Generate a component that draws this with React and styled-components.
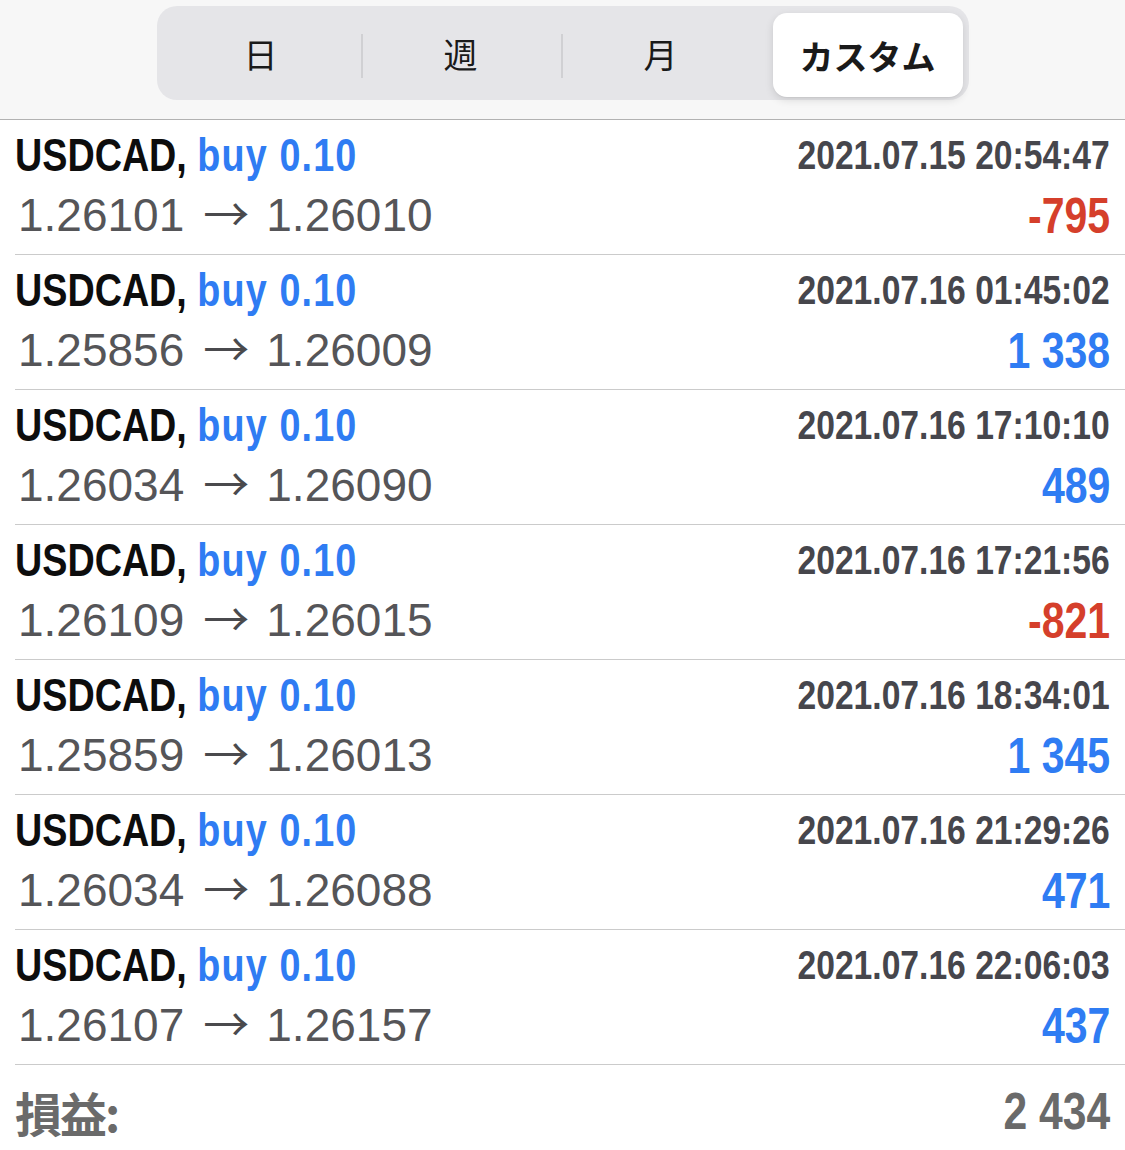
import React from "react";
import styled, { createGlobalStyle } from "styled-components";

const GlobalStyle = createGlobalStyle`
  html, body {
    margin: 0;
    padding: 0;
    background: #ffffff;
  }
  body {
    font-family: "Liberation Sans", Arial, sans-serif;
  }
`;

// no condensed Helvetica here, so bold Liberation Sans is narrowed like Arial Narrow
const Narrow = styled.span`
  display: inline-block;
  font-family: "Liberation Sans", Arial, sans-serif;
  font-weight: 700;
  transform: scaleX(0.82);
  transform-origin: ${(p) => (p.$right ? "right" : "left")} center;
  white-space: nowrap;
`;

const Page = styled.div`
  width: 1125px;
  height: 1150px;
  overflow: hidden;
  background: #fff;
`;

const Header = styled.div`
  height: 120px;
  background: #f7f7f7;
  border-bottom: 1px solid #b2b2b2;
  display: flex;
  justify-content: center;
  padding-top: 6px;
  box-sizing: border-box;
`;

const Segmented = styled.div`
  width: 812px;
  height: 94px;
  background: #e5e5e8;
  border-radius: 20px;
  padding: 6px;
  box-sizing: border-box;
  display: grid;
  grid-template-columns: repeat(4, 1fr);
`;

const Segment = styled.div`
  position: relative;
  display: flex;
  align-items: center;
  justify-content: center;
  font-family: "Noto Sans CJK JP", sans-serif;
  font-size: 34px;
  font-weight: ${(p) => (p.$active ? 600 : 400)};
  color: #1a1a1a;
  border-radius: 14px;
  background: ${(p) => (p.$active ? "#ffffff" : "transparent")};
  box-shadow: ${(p) =>
    p.$active ? "0 3px 8px rgba(0,0,0,0.12), 0 1px 1px rgba(0,0,0,0.04)" : "none"};
  margin: ${(p) => (p.$active ? "1px 0 -3px 10px" : "0 0 0 -4px")};

  ${(p) =>
    p.$divider &&
    `
    &::after {
      content: "";
      position: absolute;
      right: 0;
      top: 22px;
      bottom: 16px;
      width: 2px;
      background: #d0d0d3;
    }
  `}
`;

const List = styled.div`
  display: flex;
  flex-direction: column;
`;

const Row = styled.div`
  margin-left: 15px;
  padding: 5px 15px 9px 0;
  height: 135px;
  box-sizing: border-box;
  border-bottom: 1px solid #cbcbcb;
  display: grid;
  grid-template-columns: 1fr auto;
  grid-template-rows: 60px 60px;
`;

const Title = styled.div`
  font-size: 46px;
  line-height: 60px;
  color: #0d0d0d;
  white-space: nowrap;
`;

const Side = styled.span`
  color: #2f7cf3;
  letter-spacing: 1.4px;
`;

const Prices = styled.div`
  font-family: "Liberation Sans", Arial, sans-serif;
  font-size: 46px;
  line-height: 60px;
  color: #555558;
  padding-left: 3px;
  white-space: nowrap;
`;

const Arrow = styled.span`
  font-family: "Noto Sans CJK JP", sans-serif;
  font-size: 46px;
  line-height: 0;
  margin: 0 17px 0 19px;
  color: #4a4a4d;
`;

const Time = styled.div`
  font-size: 41px;
  line-height: 60px;
  color: #46464c;
  text-align: right;
`;

const Profit = styled.div`
  font-size: 50px;
  line-height: 62px;
  text-align: right;
  color: ${(p) => (p.$loss ? "#d53f2b" : "#2f7cf3")};
`;

const Footer = styled.div`
  margin-left: 15px;
  padding: 0 15px 0 0;
  height: 84px;
  display: flex;
  align-items: center;
  justify-content: space-between;
  color: #6a6a6a;
`;

const FooterLabel = styled.div`
  font-family: "Noto Sans CJK JP", sans-serif;
  font-weight: 700;
  font-size: 47px;
  padding-top: 8px;
  letter-spacing: -2px;
`;

const FooterValue = styled.div`
  font-size: 52px;
  padding-top: 8px;
`;

const trades = [
  { open: "1.26101", close: "1.26010", time: "2021.07.15 20:54:47", profit: "-795" },
  { open: "1.25856", close: "1.26009", time: "2021.07.16 01:45:02", profit: "1 338" },
  { open: "1.26034", close: "1.26090", time: "2021.07.16 17:10:10", profit: "489" },
  { open: "1.26109", close: "1.26015", time: "2021.07.16 17:21:56", profit: "-821" },
  { open: "1.25859", close: "1.26013", time: "2021.07.16 18:34:01", profit: "1 345" },
  { open: "1.26034", close: "1.26088", time: "2021.07.16 21:29:26", profit: "471" },
  { open: "1.26107", close: "1.26157", time: "2021.07.16 22:06:03", profit: "437" },
];

const periods = ["日", "週", "月", "カスタム"];

export default function App() {
  return (
    <Page>
      <GlobalStyle />
      <Header>
        <Segmented>
          {periods.map((label, i) => (
            <Segment key={label} $active={i === 3} $divider={i < 2}>
              {label}
            </Segment>
          ))}
        </Segmented>
      </Header>
      <List>
        {trades.map((t, i) => (
          <Row key={i}>
            <Title>
              <Narrow>
                USDCAD, <Side>buy 0.10</Side>
              </Narrow>
            </Title>
            <Time>
              <Narrow $right>{t.time}</Narrow>
            </Time>
            <Prices>
              {t.open}
              <Arrow>→</Arrow>
              {t.close}
            </Prices>
            <Profit $loss={t.profit.startsWith("-")}>
              <Narrow $right>{t.profit}</Narrow>
            </Profit>
          </Row>
        ))}
      </List>
      <Footer>
        <FooterLabel>損益:</FooterLabel>
        <FooterValue>
          <Narrow $right>2 434</Narrow>
        </FooterValue>
      </Footer>
    </Page>
  );
}
